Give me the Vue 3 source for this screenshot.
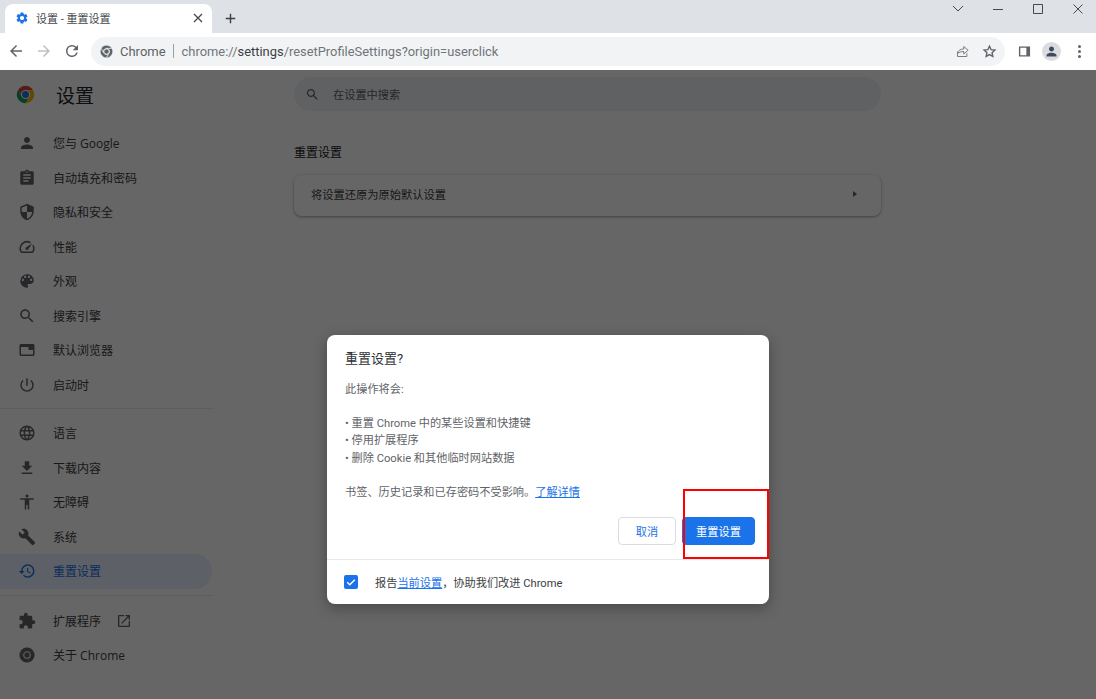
<template>
  <div class="browser">
    <!-- 标签栏 -->
    <div class="tabstrip">
      <div class="tab">
        <svg class="tab-gear" viewBox="0 0 24 24"><path :d="icons.gear" /></svg>
        <span class="tab-title">设置 - 重置设置</span>
        <svg class="tab-close" viewBox="0 0 12 12"><path d="M2 2l8 8M10 2l-8 8" /></svg>
      </div>
      <svg class="new-tab" viewBox="0 0 14 14"><path d="M7 1v12M1 7h12" /></svg>
      <div class="window-controls">
        <svg viewBox="0 0 14 14"><path d="M2 4l5 5 5-5" /></svg>
        <svg viewBox="0 0 14 14"><path d="M2 7.5h10" /></svg>
        <svg viewBox="0 0 14 14"><path d="M2.5 2.5h9v9h-9z" /></svg>
        <svg viewBox="0 0 14 14"><path d="M2.5 2.5l9 9M11.5 2.5l-9 9" /></svg>
      </div>
    </div>

    <!-- 工具栏 -->
    <div class="toolbar">
      <svg class="tool back" viewBox="0 0 24 24"><path d="M20 11H7.83l5.59-5.59L12 4l-8 8 8 8 1.41-1.41L7.83 13H20z" /></svg>
      <svg class="tool forward" viewBox="0 0 24 24"><path d="M4 11h12.17l-5.59-5.59L12 4l8 8-8 8-1.41-1.41L16.17 13H4z" /></svg>
      <svg class="tool reload" viewBox="0 0 24 24"><path d="M17.65 6.35A7.96 7.96 0 0 0 12 4a8 8 0 1 0 7.73 10h-2.08A6 6 0 1 1 12 6c1.66 0 3.14.69 4.22 1.78L13 11h7V4l-2.35 2.35z" /></svg>
      <div class="omnibox">
        <svg class="omni-chrome" viewBox="0 0 24 24">
          <path v-for="s in chromeSectors" :key="s" :d="s" />
          <circle cx="12" cy="12" r="4" />
        </svg>
        <span class="omni-label">Chrome</span>
        <span class="omni-sep"></span>
        <span class="omni-url">chrome://<b>settings</b>/resetProfileSettings?origin=userclick</span>
        <span class="omni-spacer"></span>
        <svg class="omni-share" viewBox="0 0 24 24"><path d="M4 12v8h15v-5M4 15c1-5 5-7 10-7V4l7 6-7 6v-4c-4 0-7 1-10 3z" /></svg>
        <svg class="omni-star" viewBox="0 0 24 24"><path d="M12 3.5l2.6 5.6 6 .7-4.5 4.1 1.2 6-5.3-3-5.3 3 1.2-6-4.5-4.1 6-.7z" /></svg>
      </div>
      <svg class="side-panel" viewBox="0 0 14 14"><path d="M1 1.5h12v11H1zM2.5 3v8h6.5V3z" fill-rule="evenodd" /></svg>
      <div class="avatar">
        <svg viewBox="0 0 24 24"><path :d="icons.person" /></svg>
      </div>
      <div class="dots"><i></i><i></i><i></i></div>
    </div>

    <!-- 设置页面 -->
    <div class="page">
      <aside class="sidebar">
        <div class="brand">
          <svg class="brand-logo" viewBox="0 0 24 24">
            <path class="red" :d="chromeSectors[0]" />
            <path class="green" :d="chromeSectors[1]" />
            <path class="yellow" :d="chromeSectors[2]" />
            <circle cx="12" cy="12" r="5" fill="#fff" />
            <circle cx="12" cy="12" r="4" fill="#1a73e8" />
          </svg>
          <span class="brand-title">设置</span>
        </div>
        <template v-for="(group, i) in navGroups" :key="i">
          <div v-if="i" class="nav-line" :class="{ wide: i === 2 }"></div>
          <a
            v-for="item in group"
            :key="item.label"
            class="nav-item"
            :class="{ active: item.active }"
          >
            <svg v-if="item.icon" viewBox="0 0 24 24"><path :d="item.icon" fill-rule="evenodd" /></svg>
            <svg v-else viewBox="0 0 24 24">
              <path v-for="s in chromeSectors" :key="s" :d="s" />
              <circle cx="12" cy="12" r="3.6" />
            </svg>
            <span>{{ item.label }}</span>
            <svg v-if="item.external" class="nav-external" viewBox="0 0 24 24"><path :d="icons.openNew" /></svg>
          </a>
        </template>
      </aside>

      <main class="content">
        <div class="search">
          <svg viewBox="0 0 24 24"><path :d="icons.search" /></svg>
          <span>在设置中搜索</span>
        </div>
        <h2 class="section-title">重置设置</h2>
        <div class="card">
          <span>将设置还原为原始默认设置</span>
          <i class="card-arrow"></i>
        </div>
      </main>

      <!-- 遮罩和对话框 -->
      <div class="overlay">
        <div class="dialog">
          <div class="dialog-body">
            <h3 class="dialog-title">重置设置?</h3>
            <p>此操作将会:</p>
            <p class="blank"></p>
            <p>• 重置 Chrome 中的某些设置和快捷键</p>
            <p>• 停用扩展程序</p>
            <p>• 删除 Cookie 和其他临时网站数据</p>
            <p class="blank"></p>
            <p>书签、历史记录和已存密码不受影响。<a class="link">了解详情</a></p>
          </div>
          <div class="dialog-actions">
            <button class="btn">取消</button>
            <button class="btn primary">重置设置</button>
          </div>
          <div class="dialog-footer">
            <span class="checkbox">
              <svg viewBox="0 0 14 14"><path d="M3.2 7.2l2.6 2.5 5-5" /></svg>
            </span>
            <span>报告<a class="link">当前设置</a>{{ '\uFF0C' }}协助我们改进 Chrome</span>
          </div>
          <div class="mark"></div>
        </div>
      </div>
    </div>
  </div>
</template>

<script setup>
const icons = {
  gear: 'M19.14 12.94c.04-.3.06-.61.06-.94 0-.32-.02-.64-.07-.94l2.03-1.58a.49.49 0 0 0 .12-.61l-1.92-3.32a.488.488 0 0 0-.59-.22l-2.39.96c-.5-.38-1.03-.7-1.62-.94l-.36-2.54a.484.484 0 0 0-.48-.41h-3.84c-.24 0-.43.17-.47.41l-.36 2.54c-.59.24-1.13.57-1.62.94l-2.39-.96c-.22-.08-.47 0-.59.22L2.74 8.87c-.12.21-.08.47.12.61l2.03 1.58c-.05.3-.09.63-.09.94s.02.64.07.94l-2.03 1.58a.49.49 0 0 0-.12.61l1.92 3.32c.12.22.37.29.59.22l2.39-.96c.5.38 1.03.7 1.62.94l.36 2.54c.05.24.24.41.48.41h3.84c.24 0 .44-.17.47-.41l.36-2.54c.59-.24 1.13-.56 1.62-.94l2.39.96c.22.08.47 0 .59-.22l1.92-3.32c.12-.22.07-.47-.12-.61l-2.01-1.58zM12 15.6c-1.98 0-3.6-1.62-3.6-3.6s1.62-3.6 3.6-3.6 3.6 1.62 3.6 3.6-1.62 3.6-3.6 3.6z',
  person: 'M12 12c2.21 0 4-1.79 4-4s-1.79-4-4-4-4 1.79-4 4 1.79 4 4 4zm0 2c-2.67 0-8 1.34-8 4v2h16v-2c0-2.66-5.33-4-8-4z',
  assignment: 'M19 3h-4.18C14.4 1.84 13.3 1 12 1c-1.3 0-2.4.84-2.82 2H5c-1.1 0-2 .9-2 2v14c0 1.1.9 2 2 2h14c1.1 0 2-.9 2-2V5c0-1.1-.9-2-2-2zm-7 0c.55 0 1 .45 1 1s-.45 1-1 1-1-.45-1-1 .45-1 1-1zm2 14H7v-2h7v2zm3-4H7v-2h10v2zm0-4H7V7h10v2z',
  shield: 'M12 1L3 5v6c0 5.55 3.84 10.74 9 12 5.16-1.26 9-6.45 9-12V5l-9-4zm0 10.99h7c-.53 4.12-3.28 7.79-7 8.94V12H5V6.3l7-3.11v8.8z',
  speed: 'M20.38 8.57l-1.23 1.85a8 8 0 0 1-.22 7.58H5.07A8 8 0 0 1 15.58 6.85l1.85-1.23A10 10 0 0 0 3.35 19a2 2 0 0 0 1.72 1h13.85a2 2 0 0 0 1.74-1 10 10 0 0 0-.27-10.44zm-9.79 6.84a2 2 0 0 0 2.83 0l5.66-8.49-8.49 5.66a2 2 0 0 0 0 2.83z',
  palette: 'M12 3a9 9 0 0 0 0 18c.83 0 1.5-.67 1.5-1.5 0-.39-.15-.74-.39-1.01-.23-.26-.38-.61-.38-.99 0-.83.67-1.5 1.5-1.5H16c2.76 0 5-2.24 5-5 0-4.42-4.03-8-9-8zm-5.5 9c-.83 0-1.5-.67-1.5-1.5S5.67 9 6.5 9 8 9.67 8 10.5 7.33 12 6.5 12zm3-4C8.67 8 8 7.33 8 6.5S8.67 5 9.5 5s1.5.67 1.5 1.5S10.33 8 9.5 8zm5 0c-.83 0-1.5-.67-1.5-1.5S13.67 5 14.5 5s1.5.67 1.5 1.5S15.33 8 14.5 8zm3 4c-.83 0-1.5-.67-1.5-1.5S16.67 9 17.5 9s1.5.67 1.5 1.5-.67 1.5-1.5 1.5z',
  search: 'M15.5 14h-.79l-.28-.27C15.41 12.59 16 11.11 16 9.5 16 5.91 13.09 3 9.5 3S3 5.91 3 9.5 5.91 16 9.5 16c1.61 0 3.09-.59 4.23-1.57l.27.28v.79l5 4.99L20.49 19l-4.99-5zm-6 0C7.01 14 5 11.99 5 9.5S7.01 5 9.5 5 14 7.01 14 9.5 11.99 14 9.5 14z',
  web: 'M20 4H4c-1.1 0-2 .9-2 2v12c0 1.1.9 2 2 2h16c1.1 0 2-.9 2-2V6c0-1.1-.9-2-2-2zm0 14H4V8h10v4h6v6z',
  power: 'M13 3h-2v10h2V3zm4.83 2.17l-1.42 1.42A6.92 6.92 0 0 1 19 12c0 3.87-3.13 7-7 7s-7-3.13-7-7c0-2.22 1.03-4.2 2.58-5.42L6.17 5.17A8.93 8.93 0 0 0 3 12a9 9 0 0 0 18 0c0-2.74-1.23-5.18-3.17-6.83z',
  language: 'M11.99 2C6.47 2 2 6.48 2 12s4.47 10 9.99 10C17.52 22 22 17.52 22 12S17.52 2 11.99 2zm6.93 6h-2.95a15.65 15.65 0 0 0-1.38-3.56A8.03 8.03 0 0 1 18.92 8zM12 4.04c.83 1.2 1.48 2.53 1.91 3.96h-3.82c.43-1.43 1.08-2.76 1.91-3.96zM4.26 14C4.1 13.36 4 12.69 4 12s.1-1.36.26-2h3.38c-.08.66-.14 1.32-.14 2s.06 1.34.14 2H4.26zm.82 2h2.95c.32 1.25.78 2.45 1.38 3.56A7.987 7.987 0 0 1 5.08 16zm2.95-8H5.08a7.987 7.987 0 0 1 4.33-3.56A15.65 15.65 0 0 0 8.03 8zM12 19.96c-.83-1.2-1.48-2.53-1.91-3.96h3.82c-.43 1.43-1.08 2.76-1.91 3.96zM14.34 14H9.66c-.09-.66-.16-1.32-.16-2s.07-1.35.16-2h4.68c.09.65.16 1.32.16 2s-.07 1.34-.16 2zm.25 5.56c.6-1.11 1.06-2.31 1.38-3.56h2.95a8.03 8.03 0 0 1-4.33 3.56zM16.36 14c.08-.66.14-1.32.14-2s-.06-1.34-.14-2h3.38c.16.64.26 1.31.26 2s-.1 1.36-.26 2h-3.38z',
  download: 'M19 9h-4V3H9v6H5l7 7 7-7zM5 18v2h14v-2H5z',
  accessibility: 'M12 2c1.1 0 2 .9 2 2s-.9 2-2 2-2-.9-2-2 .9-2 2-2zm9 7h-6v13h-2v-6h-2v6H9V9H3V7h18v2z',
  build: 'M22.7 19l-9.1-9.1c.9-2.3.4-5-1.5-6.9-2-2-5-2.4-7.4-1.3L9 6 6 9 1.6 4.7C.4 7.1.9 10.1 2.9 12.1c1.9 1.9 4.6 2.4 6.9 1.5l9.1 9.1c.4.4 1 .4 1.4 0l2.3-2.3c.5-.4.5-1.1.1-1.4z',
  restore: 'M13 3a9 9 0 0 0-9 9H1l3.89 3.89.07.14L9 12H6c0-3.87 3.13-7 7-7s7 3.13 7 7-3.13 7-7 7c-1.93 0-3.68-.79-4.94-2.06l-1.42 1.42A8.954 8.954 0 0 0 13 21a9 9 0 0 0 0-18zm-1 5v5l4.28 2.54.72-1.21-3.5-2.08V8H12z',
  extension: 'M20.5 11H19V7c0-1.1-.9-2-2-2h-4V3.5a2.5 2.5 0 0 0-5 0V5H4c-1.1 0-1.99.9-1.99 2v3.8H3.5c1.49 0 2.7 1.21 2.7 2.7s-1.21 2.7-2.7 2.7H2V20c0 1.1.9 2 2 2h3.8v-1.5c0-1.49 1.21-2.7 2.7-2.7 1.49 0 2.7 1.21 2.7 2.7V22H17c1.1 0 2-.9 2-2v-4h1.5a2.5 2.5 0 0 0 0-5z',
  openNew: 'M19 19H5V5h7V3H5a2 2 0 0 0-2 2v14a2 2 0 0 0 2 2h14c1.1 0 2-.9 2-2v-7h-2v7zM14 3v2h3.59l-9.83 9.83 1.41 1.41L19 6.41V10h2V3h-7z'
}

// Chrome 图标的三个扇形:红、绿、黄
const chromeSectors = [
  'M3.34 7A10 10 0 0 1 20.66 7H12A5 5 0 0 0 7.67 14.5Z',
  'M3.34 7A10 10 0 0 0 12 22L16.33 14.5A5 5 0 0 1 7.67 14.5Z',
  'M12 22A10 10 0 0 0 20.66 7H12A5 5 0 0 1 16.33 14.5Z'
]

const navGroups = [
  [
    { label: '您与 Google', icon: icons.person },
    { label: '自动填充和密码', icon: icons.assignment },
    { label: '隐私和安全', icon: icons.shield },
    { label: '性能', icon: icons.speed },
    { label: '外观', icon: icons.palette },
    { label: '搜索引擎', icon: icons.search },
    { label: '默认浏览器', icon: icons.web },
    { label: '启动时', icon: icons.power }
  ],
  [
    { label: '语言', icon: icons.language },
    { label: '下载内容', icon: icons.download },
    { label: '无障碍', icon: icons.accessibility },
    { label: '系统', icon: icons.build },
    { label: '重置设置', icon: icons.restore, active: true }
  ],
  [
    { label: '扩展程序', icon: icons.extension, external: true },
    { label: '关于 Chrome' }
  ]
]
</script>

<style>
html, body {
  margin: 0;
  background: #fff;
}
</style>

<style scoped>
.browser {
  position: relative;
  height: 699px;
  overflow: hidden;
  display: flex;
  flex-direction: column;
  font-family: "Roboto", "Noto Sans CJK SC", sans-serif;
  color: #3c4043;
}

/* 标签栏 */
.tabstrip {
  height: 33px;
  flex: none;
  display: flex;
  align-items: flex-end;
  background: #dee1e6;
  padding-left: 5px;
}
.tab {
  width: 207px;
  height: 29px;
  box-sizing: border-box;
  background: #fff;
  border-radius: 8px 8px 0 0;
  display: flex;
  align-items: center;
  padding: 0 8px 2px 10px;
}
.tab-gear {
  width: 14px;
  height: 14px;
  fill: #1a73e8;
}
.tab-title {
  margin-left: 7px;
  font-size: 11px;
  flex: 1;
  color: #45494d;
}
.tab-close {
  width: 12px;
  height: 12px;
  fill: none;
  stroke: #45494d;
  stroke-width: 1.3;
}
.new-tab {
  width: 11px;
  height: 11px;
  fill: none;
  stroke: #3c4043;
  stroke-width: 1.8;
  margin: 0 0 9px 13px;
}
.window-controls {
  margin-left: auto;
  align-self: flex-start;
  display: flex;
  gap: 26px;
  padding: 2px 11px 0 0;
}
.window-controls svg {
  width: 14px;
  height: 14px;
  fill: none;
  stroke: #45494d;
  stroke-width: 1;
}

/* 工具栏 */
.toolbar {
  height: 37px;
  flex: none;
  box-sizing: border-box;
  display: flex;
  align-items: center;
  background: #fff;
  padding-left: 7px;
  padding-bottom: 1px;
}
.tool {
  width: 18px;
  height: 18px;
  fill: #5f6368;
  margin-right: 10px;
}
.forward {
  fill: #bdc1c6;
}
.omnibox {
  width: 914px;
  height: 29px;
  box-sizing: border-box;
  border-radius: 15px;
  background: #f1f3f4;
  display: flex;
  align-items: center;
  padding: 0 7px 0 8px;
  font-size: 13px;
}
.omni-chrome {
  width: 15px;
  height: 15px;
  fill: #5f6368;
  stroke: #f1f3f4;
  stroke-width: 0.9;
}
.omni-label {
  margin-left: 6px;
  color: #5f6368;
}
.omni-sep {
  width: 1px;
  height: 14px;
  background: #9aa0a6;
  margin: 0 8px 0 7px;
}
.omni-url {
  color: #70757a;
  font-size: 12.9px;
}
.omni-url b {
  font-weight: 400;
  color: #3c4043;
}
.omni-spacer {
  flex: 1;
}
.omni-share {
  width: 15px;
  height: 15px;
  fill: none;
  stroke: #70757a;
  stroke-width: 1.5;
}
.omni-star {
  width: 15px;
  height: 15px;
  fill: none;
  stroke: #5f6368;
  stroke-width: 2.2;
  margin: 0 1px 0 12px;
}
.side-panel {
  width: 13px;
  height: 13px;
  fill: #5f6368;
  margin-left: 13px;
}
.avatar {
  width: 19px;
  height: 19px;
  border-radius: 50%;
  background: #dadce0;
  margin-left: 11px;
  display: flex;
  align-items: center;
  justify-content: center;
}
.avatar svg {
  width: 15px;
  height: 15px;
  fill: #3f4a5f;
}
.dots {
  display: flex;
  flex-direction: column;
  gap: 2px;
  margin-left: 17px;
}
.dots i {
  width: 3px;
  height: 3px;
  border-radius: 50%;
  background: #5f6368;
}

/* 设置页面 */
.page {
  position: relative;
  flex: 1;
  display: flex;
  background: #fff;
}
.sidebar {
  width: 214px;
  flex: none;
  padding-bottom: 10px;
}
.brand {
  height: 48px;
  margin-bottom: 8px;
  display: flex;
  align-items: center;
  padding-left: 16px;
}
.brand-logo {
  width: 21px;
  height: 21px;
  margin-left: -1px;
}
.red { fill: #db4437; }
.green { fill: #0f9d58; }
.yellow { fill: #f4b400; }
.brand-title {
  margin-left: 20px;
  font-size: 19px;
  color: #202124;
}
.nav-item {
  height: 34.5px;
  width: 212px;
  box-sizing: border-box;
  display: flex;
  align-items: center;
  padding-left: 18px;
  font-family: "Open Sans", "Noto Sans CJK SC", sans-serif;
  font-size: 12px;
  border-radius: 0 17px 17px 0;
  color: #3c4043;
}
.nav-item > svg:first-child {
  width: 18px;
  height: 18px;
  flex: none;
  fill: #5f6368;
  margin-right: 17px;
}
.nav-item.active {
  background: #e8f0fe;
  color: #1a73e8;
}
.nav-item.active > svg:first-child {
  fill: #1a73e8;
}
.nav-external {
  width: 16px;
  height: 16px;
  fill: #5f6368;
  margin-left: 15px;
}
.nav-line {
  height: 1px;
  background: #e8eaed;
  margin: 6px 0 7px;
}
.nav-line.wide {
  margin: 6px 0 8px;
}
.content {
  width: 587px;
  margin-left: 80px;
  padding-top: 7px;
}
.search {
  height: 34px;
  box-sizing: border-box;
  border-radius: 17px;
  background: #f1f3f4;
  display: flex;
  align-items: center;
  padding-left: 11px;
  font-size: 11.2px;
  color: #5f6368;
}
.search svg {
  width: 15px;
  height: 15px;
  fill: #5f6368;
  margin-right: 13px;
}
.section-title {
  margin: 33px 0 13px;
  font-size: 12px;
  line-height: 18px;
  font-weight: 400;
  color: #202124;
}
.card {
  height: 41px;
  box-sizing: border-box;
  border-radius: 8px;
  background: #fff;
  box-shadow: 0 1px 2px rgba(60, 64, 67, 0.3), 0 1px 3px 1px rgba(60, 64, 67, 0.15);
  display: flex;
  align-items: center;
  justify-content: space-between;
  padding: 0 24px 3px 17px;
  font-size: 11.25px;
  color: #3c4043;
}
.card-arrow {
  width: 0;
  height: 0;
  border-left: 4px solid #5f6368;
  border-top: 3.5px solid transparent;
  border-bottom: 3.5px solid transparent;
}

/* 遮罩和对话框 */
.overlay {
  position: absolute;
  inset: 0;
  background: rgba(0, 0, 0, 0.6);
  display: flex;
  justify-content: center;
  align-items: flex-start;
  padding-top: 265px;
}
.dialog {
  position: relative;
  width: 442px;
  height: 269px;
  box-sizing: border-box;
  border-radius: 8px;
  background: #fff;
  box-shadow: 0 4px 14px rgba(0, 0, 0, 0.3);
  display: flex;
  flex-direction: column;
}
.dialog-body {
  padding: 15px 18px 0;
  font-size: 11.2px;
  line-height: 17.3px;
  color: #5f6368;
}
.dialog-body p {
  margin: 0;
  white-space: nowrap;
}
.blank {
  height: 17.3px;
}
.dialog-title {
  margin: 0 0 12.5px;
  font-size: 13px;
  line-height: 18px;
  font-weight: 400;
  color: #303134;
}
.link {
  color: #1a73e8;
  text-decoration: underline;
}
.dialog-actions {
  display: flex;
  justify-content: flex-end;
  gap: 6px;
  padding: 15px 14px 0 0;
}
.btn {
  height: 28px;
  width: 58px;
  padding: 0;
  border: 1px solid #dadce0;
  border-radius: 4px;
  background: #fff;
  color: #1a73e8;
  font: 400 11.2px "Roboto", "Noto Sans CJK SC", sans-serif;
}
.btn.primary {
  width: 73px;
  border-color: #1a73e8;
  background: #1a73e8;
  color: #fff;
}
.dialog-footer {
  margin-top: auto;
  height: 45px;
  box-sizing: border-box;
  border-top: 1px solid #e8eaed;
  display: flex;
  align-items: center;
  padding: 0 0 1px 17px;
  font-size: 11.2px;
  color: #3c4043;
}
.checkbox {
  width: 14px;
  height: 14px;
  border-radius: 2px;
  background: #1a73e8;
  margin-right: 17px;
  display: flex;
}
.checkbox svg {
  fill: none;
  stroke: #fff;
  stroke-width: 1.5;
}
.mark {
  position: absolute;
  left: 356px;
  top: 154px;
  width: 86px;
  height: 70px;
  box-sizing: border-box;
  border: 2.5px solid #f00;
}
</style>
